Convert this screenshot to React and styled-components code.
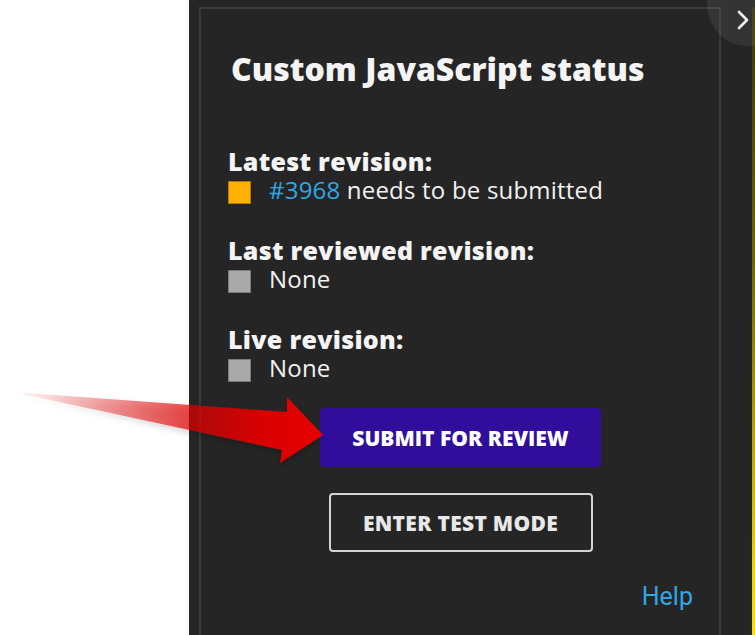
import React from 'react';
import styled, { createGlobalStyle } from 'styled-components';

const GlobalStyle = createGlobalStyle`
  html, body {
    margin: 0;
    padding: 0;
    background: #ffffff;
  }
  body {
    font-family: "Open Sans", Roboto, "Liberation Sans", sans-serif;
  }
`;

const Page = styled.div`
  position: relative;
  display: flex;
  width: 755px;
  height: 635px;
  overflow: hidden;
`;

const Blank = styled.div`
  width: 189px;
  flex-shrink: 0;
  background: #ffffff;
`;

const Panel = styled.div`
  position: relative;
  flex: 1;
  display: flex;
  padding: 7px 0 0 10px;
  background: #252525;
  overflow: hidden;
`;

const Card = styled.div`
  box-sizing: border-box;
  width: 522px;
  height: 700px;
  flex-shrink: 0;
  border: 2px solid #3a3a3a;
  border-bottom: none;
  padding: 0 26px 0 27px;
  color: #f4f4f4;
`;

const Stripe = styled.div`
  margin-left: auto;
  width: 3px;
  background: linear-gradient(to bottom, #3a3510 0%, #6b6410 40%, #e8d21a 90%, #f5dc20 100%);
`;

const CloseTab = styled.button`
  position: absolute;
  top: -36px;
  right: -34px;
  width: 82px;
  height: 82px;
  border-radius: 50%;
  border: none;
  background: rgba(255, 255, 255, 0.07);
  padding: 0;
  cursor: pointer;

  svg {
    position: absolute;
    left: 30px;
    top: 46px;
  }
`;

const Title = styled.h2`
  margin: 40px 0 0 3px;
  font-family: "Open Sans", Roboto, sans-serif;
  font-weight: 800;
  font-size: 32px;
  line-height: 40px;
`;

const Section = styled.div`
  margin-top: ${(p) => p.$top}px;
`;

const Label = styled.div`
  font-family: "Open Sans", Roboto, sans-serif;
  font-weight: 800;
  font-size: 25px;
  line-height: 28px;
  letter-spacing: 0.3px;
`;

const StatusRow = styled.div`
  display: flex;
  align-items: flex-start;
  gap: 18px;
  font-size: 24px;
  line-height: 30px;
  letter-spacing: 0.2px;
  color: #f2f2f2;
`;

const Swatch = styled.span`
  width: 21px;
  height: 21px;
  margin-top: 6px;
  flex-shrink: 0;
  background: ${(p) => p.$color};
  border: 1px solid ${(p) => p.$edge};
`;

const RevLink = styled.a`
  color: #2ea8e6;
  text-decoration: none;
`;

const Actions = styled.div`
  display: flex;
  flex-direction: column;
  align-items: center;
  gap: 26px;
  margin-top: 25px;
`;

const Button = styled.button`
  box-sizing: border-box;
  height: 59px;
  width: ${(p) => p.$width}px;
  border-radius: 4px;
  border: ${(p) => (p.$primary ? 'none' : '2px solid #d4d4d4')};
  background: ${(p) => (p.$primary ? '#310d9c' : 'transparent')};
  color: ${(p) => (p.$primary ? '#ffffff' : '#e8e8e8')};
  font-family: "Open Sans", Roboto, sans-serif;
  font-weight: 800;
  font-size: 21px;
  letter-spacing: ${(p) => (p.$primary ? 0 : 0.3)}px;
  cursor: pointer;
`;

const HelpRow = styled.div`
  display: flex;
  justify-content: flex-end;
  margin-top: 31px;
`;

const HelpLink = styled.a`
  color: #2ea8e6;
  font-family: Roboto, "Liberation Sans", sans-serif;
  font-size: 25px;
  line-height: 28px;
  text-decoration: none;
`;

const Arrow = styled.svg`
  position: absolute;
  left: 0;
  top: 380px;
  pointer-events: none;
`;

const revisions = [
  { label: 'Latest revision:', color: '#ffb000', edge: '#b37a00', link: '#3968', text: ' needs to be submitted', top: 58 },
  { label: 'Last reviewed revision:', color: '#a9a9a9', edge: '#7a7a7a', text: 'None', top: 31 },
  { label: 'Live revision:', color: '#a9a9a9', edge: '#7a7a7a', text: 'None', top: 31 },
];

const App = () => (
  <Page>
    <GlobalStyle />
    <Blank />
    <Panel>
      <Card>
        <Title>Custom JavaScript status</Title>
        {revisions.map((r) => (
          <Section key={r.label} $top={r.top}>
            <Label>{r.label}</Label>
            <StatusRow>
              <Swatch $color={r.color} $edge={r.edge} />
              <span>
                {r.link && <RevLink href="#">{r.link}</RevLink>}
                {r.text}
              </span>
            </StatusRow>
          </Section>
        ))}
        <Actions>
          <Button $primary $width={281}>SUBMIT FOR REVIEW</Button>
          <Button $width={264}>ENTER TEST MODE</Button>
        </Actions>
        <HelpRow>
          <HelpLink href="#">Help</HelpLink>
        </HelpRow>
      </Card>
      <Stripe />
      <CloseTab aria-label="Close">
        <svg width="12" height="20" viewBox="0 0 12 20">
          <polyline points="2,2 10,10 2,18" fill="none" stroke="#f0f0f0" strokeWidth="2.6" strokeLinecap="round" strokeLinejoin="round" />
        </svg>
      </CloseTab>
    </Panel>
    <Arrow width="340" height="100" viewBox="0 0 340 100">
      <defs>
        <linearGradient id="arrowFill" x1="13" y1="0" x2="323" y2="0" gradientUnits="userSpaceOnUse">
          <stop offset="0" stopColor="#e00000" stopOpacity="0" />
          <stop offset="0.45" stopColor="#e00000" stopOpacity="0.55" />
          <stop offset="0.8" stopColor="#e00000" stopOpacity="0.95" />
          <stop offset="1" stopColor="#e80000" stopOpacity="1" />
        </linearGradient>
        <filter id="arrowShadow" x="-10%" y="-30%" width="120%" height="160%">
          <feDropShadow dx="0" dy="3" stdDeviation="3" floodColor="#000" floodOpacity="0.25" />
        </filter>
      </defs>
      <polygon
        points="13,12 287,32 287,17 323,55 280,83 282,70"
        fill="url(#arrowFill)"
        filter="url(#arrowShadow)"
      />
    </Arrow>
  </Page>
);

export default App;
